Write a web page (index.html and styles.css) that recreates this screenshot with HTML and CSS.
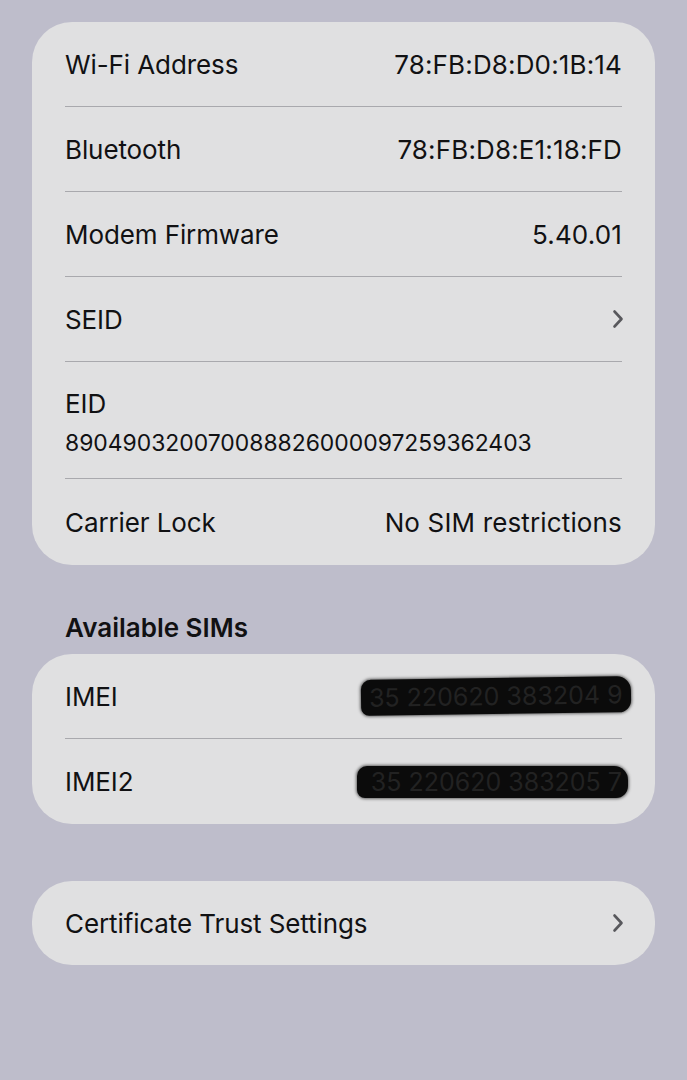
FILE: index.html
```html
<!DOCTYPE html>
<html>
<head>
<meta charset="utf-8">
<link rel="stylesheet" href="styles.css">
</head>
<body>
<div class="page">
  <div class="card">
    <div class="row"><span class="label">Wi-Fi Address</span><span class="value">78:FB:D8:D0:1B:14</span></div>
    <div class="row"><span class="label">Bluetooth</span><span class="value">78:FB:D8:E1:18:FD</span></div>
    <div class="row"><span class="label">Modem Firmware</span><span class="value">5.40.01</span></div>
    <div class="row"><span class="label">SEID</span>
      <svg class="chev" width="12" height="20" viewBox="0 0 12 20"><path d="M2.5 2.5 L9.5 10 L2.5 17.5" fill="none" stroke="#58585c" stroke-width="2.6" stroke-linecap="round" stroke-linejoin="round"/></svg>
    </div>
    <div class="row tall"><span class="label">EID</span><span class="sub">890490320070088826000097259362403</span></div>
    <div class="row last"><span class="label">Carrier Lock</span><span class="value">No SIM restrictions</span></div>
  </div>

  <div class="section-title">Available SIMs</div>
  <div class="card">
    <div class="row"><span class="label">IMEI</span><span class="redact r1">35 220620 383204 9</span></div>
    <div class="row last sims"><span class="label">IMEI2</span><span class="redact r2">35 220620 383205 7</span></div>
  </div>

  <div class="card card-gap">
    <div class="row last single"><span class="label">Certificate Trust Settings</span>
      <svg class="chev" width="12" height="20" viewBox="0 0 12 20"><path d="M2.5 2.5 L9.5 10 L2.5 17.5" fill="none" stroke="#58585c" stroke-width="2.6" stroke-linecap="round" stroke-linejoin="round"/></svg>
    </div>
  </div>
</div>
</body>
</html>
```
FILE: styles.css
```css
html, body {
  margin: 0;
  padding: 0;
  background: #bebdcb;
  height: 100%;
}
body {
  font-family: Inter, "Noto Sans", sans-serif;
  color: #111113;
}
.page {
  padding: 22px 32px 0;
  display: flex;
  flex-direction: column;
}
.card {
  background: #e0e0e1;
  border-radius: 40px;
}
.row {
  margin: 0 33px;
  height: 84px;
  border-bottom: 1px solid #a9a9ad;
  display: flex;
  align-items: center;
  justify-content: space-between;
}
.row.last {
  border-bottom: none;
  height: 86px;
}
.row.sims {
  height: 85px;
}
.row.single {
  height: 84px;
}
.row.tall {
  height: 117px;
  flex-direction: column;
  align-items: flex-start;
  justify-content: flex-start;
  padding-top: 26px;
  box-sizing: border-box;
}
.label {
  font-size: 26px;
  letter-spacing: -0.1px;
}
.value {
  font-size: 26px;
  letter-spacing: 0.15px;
}
.sub {
  font-size: 22.9px;
  margin-top: 10px;
}
.chev {
  margin-right: -2px;
}
.section-title {
  font-size: 26px;
  font-weight: 600;
  margin: 47px 0 10px 33px;
  line-height: 32px;
}
.redact {
  font-size: 25px;
  color: #222;
  background: #0b0b0b;
  padding: 3px 8px;
  border-radius: 10px 14px 12px 8px;
  box-shadow: 0 0 3px 1px rgba(0,0,0,0.55);
}
.r1 {
  margin-right: -9px;
  transform: rotate(-0.8deg);
}
.r2 {
  margin-right: -6px;
  padding: 1px 6px 1px 14px;
}
.card-gap {
  margin-top: 57px;
}
```
